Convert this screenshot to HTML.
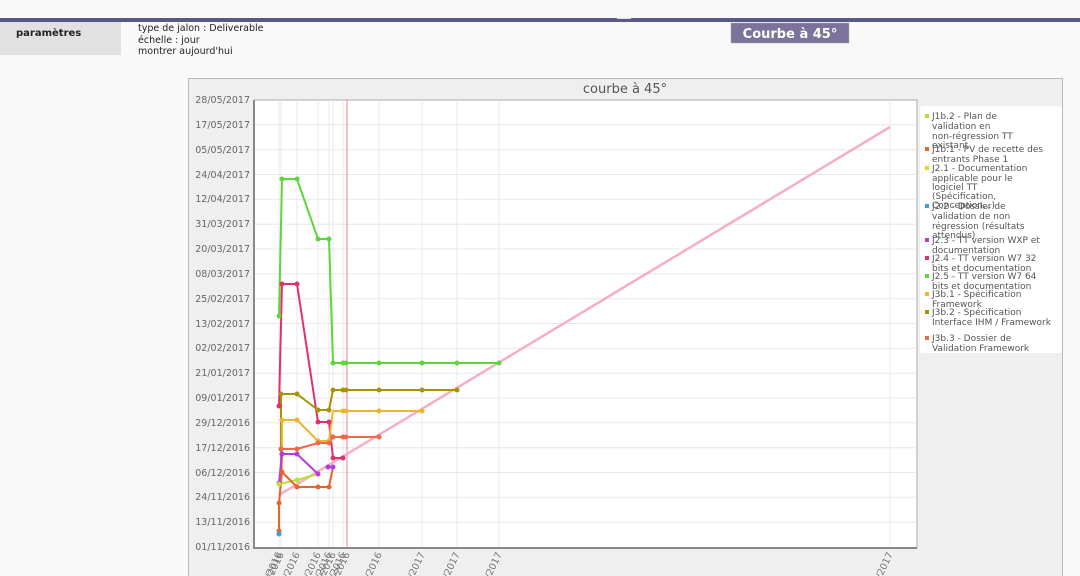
<!DOCTYPE html>
<html><head><meta charset="utf-8"><style>
html,body{margin:0;width:1080px;height:576px;overflow:hidden;background:#f9f9f9;font-family:"DejaVu Sans","Liberation Sans",sans-serif;}
svg{position:absolute;left:0;top:0;display:block}
</style></head><body>
<svg width="1080" height="576" viewBox="0 0 1080 576" xmlns="http://www.w3.org/2000/svg" font-family="DejaVu Sans, Liberation Sans, sans-serif">
<rect x="0" y="18" width="1080" height="4" fill="#5a5888"/>
<rect x="617" y="18" width="14" height="1" fill="#ddd"/>
<rect x="0" y="22" width="121" height="33" fill="#e1e1e1"/>
<text x="16" y="36" font-size="10" font-weight="bold" fill="#222">paramètres</text>
<text x="138" y="31" font-size="9.5" fill="#222">type de jalon : Deliverable</text>
<text x="138" y="43" font-size="9.5" fill="#222">échelle : jour</text>
<text x="138" y="54" font-size="9.5" fill="#222">montrer aujourd'hui</text>
<rect x="731" y="23" width="118" height="20" fill="#7b7399" stroke="#aaa" stroke-width="0.5"/>
<text x="790" y="38" font-size="13" font-weight="bold" fill="#fff" text-anchor="middle">Courbe à 45°</text>
<path d="M188.5 576V78.5H1062.5V576" fill="#efefef" stroke="#bbb"/>
<text x="625" y="93" font-size="13" fill="#555" text-anchor="middle">courbe à 45°</text>
<rect x="254" y="100" width="663" height="448" fill="#fff" stroke="#aaa"/>
<g stroke="#e8e8e8" stroke-width="1">
<path d="M254 124.8H917M254 149.7H917M254 174.5H917M254 199.3H917M254 224.2H917M254 249H917M254 273.8H917M254 298.7H917M254 323.5H917M254 348.3H917M254 373.2H917M254 398H917M254 422.8H917M254 447.7H917M254 472.5H917M254 497.3H917M254 522.2H917"/>
<path d="M279 100V548M281 100V548M297 100V548M318 100V548M329 100V548M333 100V548M343 100V548M379 100V548M422 100V548M457 100V548M499 100V548M890 100V548"/>
</g>
<path d="M254 100V548H917" stroke="#888" stroke-width="2" fill="none"/>
<g font-size="9.5" fill="#666" text-anchor="end">
<text x="250" y="103">28/05/2017</text><text x="250" y="128">17/05/2017</text><text x="250" y="153">05/05/2017</text><text x="250" y="178">24/04/2017</text><text x="250" y="202">12/04/2017</text><text x="250" y="227">31/03/2017</text><text x="250" y="252">20/03/2017</text><text x="250" y="277">08/03/2017</text><text x="250" y="302">25/02/2017</text><text x="250" y="327">13/02/2017</text><text x="250" y="351">02/02/2017</text><text x="250" y="376">21/01/2017</text><text x="250" y="401">09/01/2017</text><text x="250" y="426">29/12/2016</text><text x="250" y="451">17/12/2016</text><text x="250" y="476">06/12/2016</text><text x="250" y="500">24/11/2016</text><text x="250" y="525">13/11/2016</text><text x="250" y="550">01/11/2016</text>
</g>
<g font-size="9.5" fill="#777" text-anchor="end">
<text transform="translate(282,554) rotate(-65)">20/11/2016</text>
<text transform="translate(284,554) rotate(-65)">21/11/2016</text>
<text transform="translate(300,554) rotate(-65)">28/11/2016</text>
<text transform="translate(321,554) rotate(-65)">08/12/2016</text>
<text transform="translate(332,554) rotate(-65)">13/12/2016</text>
<text transform="translate(336,554) rotate(-65)">15/12/2016</text>
<text transform="translate(346,554) rotate(-65)">19/12/2016</text>
<text transform="translate(350,554) rotate(-65)">20/12/2016</text>
<text transform="translate(382,554) rotate(-65)">30/12/2016</text>
<text transform="translate(425,554) rotate(-65)">19/01/2017</text>
<text transform="translate(460,554) rotate(-65)">04/02/2017</text>
<text transform="translate(502,554) rotate(-65)">24/02/2017</text>
<text transform="translate(893,554) rotate(-65)">26/07/2017</text>
</g>
<line x1="347" y1="100" x2="347" y2="548" stroke="#e88" stroke-width="1"/>
<line x1="279" y1="495" x2="890" y2="127" stroke="#f6adc6" stroke-width="2.5"/>
<g fill="none" stroke-width="2" stroke-linejoin="round">
<polyline stroke="#5cd639" points="279,316 282,179 297,179 318,239 329,239 333,363 343,363 346,363 379,363 422,363 457,363 499,363"/>
<polyline stroke="#e0306e" points="279,406 282,284 297,284 318,422 329,422 333,458 343,458"/>
<polyline stroke="#a99200" points="281,450 281,394 297,394 318,410 329,410 333,390 343,390 346,390 379,390 422,390 457,390"/>
<polyline stroke="#eab530" points="282,470 282,420 297,420 318,441 329,441 333,411 343,411 346,411 379,411 422,411"/>
<polyline stroke="#ea6a4a" points="281,470 281,449 297,449 318,443 329,443 333,437 343,437 346,437 379,437"/>
<polyline stroke="#b43de0" points="279,483 282,454 297,454 318,474"/>
<polyline stroke="#b43de0" points="328,467 333,467"/>
<polyline stroke="#b5e03a" points="279,484 297,480 318,474"/>
<polyline stroke="#e8642a" points="279,533 279,503 282,472 297,487 318,487 329,487 333,467"/>
</g>
<g fill="#5cd639"><circle cx="279" cy="316" r="2.5"/><circle cx="282" cy="179" r="2.5"/><circle cx="297" cy="179" r="2.5"/><circle cx="318" cy="239" r="2.5"/><circle cx="329" cy="239" r="2.5"/><circle cx="333" cy="363" r="2.5"/><circle cx="343" cy="363" r="2.5"/><circle cx="346" cy="363" r="2.5"/><circle cx="379" cy="363" r="2.5"/><circle cx="422" cy="363" r="2.5"/><circle cx="457" cy="363" r="2.5"/><circle cx="499" cy="363" r="2.5"/></g>
<g fill="#e0306e"><circle cx="279" cy="406" r="2.5"/><circle cx="282" cy="284" r="2.5"/><circle cx="297" cy="284" r="2.5"/><circle cx="318" cy="422" r="2.5"/><circle cx="329" cy="422" r="2.5"/><circle cx="333" cy="458" r="2.5"/><circle cx="343" cy="458" r="2.5"/></g>
<g fill="#a99200"><circle cx="281" cy="394" r="2.5"/><circle cx="297" cy="394" r="2.5"/><circle cx="318" cy="410" r="2.5"/><circle cx="329" cy="410" r="2.5"/><circle cx="333" cy="390" r="2.5"/><circle cx="343" cy="390" r="2.5"/><circle cx="346" cy="390" r="2.5"/><circle cx="379" cy="390" r="2.5"/><circle cx="422" cy="390" r="2.5"/><circle cx="457" cy="390" r="2.5"/></g>
<g fill="#eab530"><circle cx="282" cy="420" r="2.5"/><circle cx="297" cy="420" r="2.5"/><circle cx="318" cy="441" r="2.5"/><circle cx="329" cy="441" r="2.5"/><circle cx="343" cy="411" r="2.5"/><circle cx="346" cy="411" r="2.5"/><circle cx="379" cy="411" r="2.5"/><circle cx="422" cy="411" r="2.5"/></g>
<g fill="#ea6a4a"><circle cx="281" cy="449" r="2.5"/><circle cx="297" cy="449" r="2.5"/><circle cx="318" cy="443" r="2.5"/><circle cx="329" cy="443" r="2.5"/><circle cx="333" cy="437" r="2.5"/><circle cx="343" cy="437" r="2.5"/><circle cx="346" cy="437" r="2.5"/><circle cx="379" cy="437" r="2.5"/></g>
<g fill="#b43de0"><circle cx="279" cy="483" r="2.5"/><circle cx="282" cy="454" r="2.5"/><circle cx="297" cy="454" r="2.5"/><circle cx="318" cy="474" r="2.5"/><circle cx="328" cy="467" r="2.5"/><circle cx="333" cy="467" r="2.5"/></g>
<g fill="#b5e03a"><circle cx="279" cy="484" r="2.5"/><circle cx="297" cy="480" r="2.5"/></g>
<g fill="#e8642a"><circle cx="279" cy="531" r="2.5"/><circle cx="279" cy="503" r="2.5"/><circle cx="282" cy="472" r="2.5"/><circle cx="297" cy="487" r="2.5"/><circle cx="318" cy="487" r="2.5"/><circle cx="329" cy="487" r="2.5"/></g>
<circle cx="279" cy="534" r="2.5" fill="#3a9ee0"/>
<rect x="920" y="106" width="142" height="247" rx="3" fill="#fff"/>
<g font-size="9" fill="#555">
<rect x="925" y="114" width="4" height="4" fill="#b5e03a"/><text x="932" y="119">J1b.2 - Plan de</text><text x="932" y="129">validation en</text><text x="932" y="139">non-régression TT</text><text x="932" y="148">existant</text>
<rect x="925" y="147" width="4" height="4" fill="#e8642a"/><text x="932" y="152">J1b.1 - PV de recette des</text><text x="932" y="162">entrants Phase 1</text>
<rect x="925" y="166" width="4" height="4" fill="#e6d02a"/><text x="932" y="171">J2.1 - Documentation</text><text x="932" y="181">applicable pour le</text><text x="932" y="190">logiciel TT</text><text x="932" y="199">(Spécification,</text><text x="932" y="208">Conception...)</text>
<rect x="925" y="204" width="4" height="4" fill="#3a9ee0"/><text x="932" y="209">J2.2 - Dossier de</text><text x="932" y="219">validation de non</text><text x="932" y="229">régression (résultats</text><text x="932" y="238">attendus)</text>
<rect x="925" y="238" width="4" height="4" fill="#b43de0"/><text x="932" y="243">J2.3 - TT version WXP et</text><text x="932" y="253">documentation</text>
<rect x="925" y="256" width="4" height="4" fill="#e0306e"/><text x="932" y="261">J2.4 - TT version W7 32</text><text x="932" y="271">bits et documentation</text>
<rect x="925" y="274" width="4" height="4" fill="#5cd639"/><text x="932" y="279">J2.5 - TT version W7 64</text><text x="932" y="289">bits et documentation</text>
<rect x="925" y="292" width="4" height="4" fill="#eab530"/><text x="932" y="297">J3b.1 - Spécification</text><text x="932" y="307">Framework</text>
<rect x="925" y="310" width="4" height="4" fill="#a99200"/><text x="932" y="315">J3b.2 - Spécification</text><text x="932" y="325">Interface IHM / Framework</text>
<rect x="925" y="336" width="4" height="4" fill="#ea6a4a"/><text x="932" y="341">J3b.3 - Dossier de</text><text x="932" y="351">Validation Framework</text>
</g>
</svg>
</body></html>
